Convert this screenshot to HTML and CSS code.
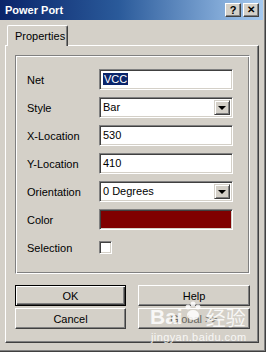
FILE: index.html
```html
<!DOCTYPE html>
<html lang="en">
<head>
    <meta charset="UTF-8">
    <title>Power Port</title>
    <link rel="stylesheet" href="styles.css">
</head>
<body>
    <div class="window">
        <div class="titlebar">
            <span class="title">Power Port</span>
            <span class="cap-btn">?</span>
            <span class="cap-btn close">&#x2715;</span>
        </div>
        <div class="content">
            <div class="tabs">
                <div class="tab">Properties</div>
            </div>
            <div class="panel">
                <div class="group">
                    <div class="row">
                        <label>Net</label>
                        <div class="field"><span class="sel">VCC</span></div>
                    </div>
                    <div class="row">
                        <label>Style</label>
                        <div class="field combo">Bar<span class="arrow"></span></div>
                    </div>
                    <div class="row">
                        <label>X-Location</label>
                        <div class="field">530</div>
                    </div>
                    <div class="row">
                        <label>Y-Location</label>
                        <div class="field">410</div>
                    </div>
                    <div class="row">
                        <label>Orientation</label>
                        <div class="field combo">0 Degrees<span class="arrow"></span></div>
                    </div>
                    <div class="row">
                        <label>Color</label>
                        <div class="field swatch"></div>
                    </div>
                    <div class="row">
                        <label>Selection</label>
                        <div><span class="check"></span></div>
                    </div>
                </div>
                <div class="buttons">
                    <button class="btn default">OK</button>
                    <button class="btn">Help</button>
                    <button class="btn">Cancel</button>
                    <button class="btn faded">Global &gt;&gt;</button>
                </div>
            </div>
        </div>
        <div class="watermark">
            <div class="wm-logo">Bai<svg width="18" height="20" viewBox="0 0 18 20"><circle cx="4" cy="6" r="2.5"/><circle cx="9" cy="3" r="2.5"/><circle cx="14" cy="6" r="2.5"/><ellipse cx="9" cy="14" rx="6" ry="5"/></svg><span class="wm-cn">经验</span></div>
            <div class="wm-url">jingyan.baidu.com</div>
        </div>
    </div>
</body>
</html>
```

FILE: styles.css
```css
body {
    margin: 0;
    background-color: #d4d0c8;
    font-family: "Liberation Sans", Arial, sans-serif;
    font-size: 11px;
    color: #000;
}
.window {
    position: relative;
    width: 266px;
    height: 352px;
    box-sizing: border-box;
    padding-right: 3px;
    background-color: #d4d0c8;
    box-shadow: inset -1px -1px #404040, inset -2px -2px #808080;
    overflow: hidden;
}
.titlebar {
    height: 20px;
    display: flex;
    align-items: center;
    gap: 2px;
    padding: 0 4px 0 5px;
    background: linear-gradient(to right, #0a246a, #2a5a9a 45%, #a6caf0);
}
.title {
    flex: 1;
    color: #fff;
    font-weight: bold;
    font-size: 11px;
}
.cap-btn {
    width: 16px;
    height: 14px;
    box-sizing: border-box;
    background-color: #d4d0c8;
    border: 1px solid;
    border-color: #fff #404040 #404040 #fff;
    box-shadow: inset -1px -1px #808080;
    font-weight: bold;
    font-size: 11px;
    line-height: 12px;
    text-align: center;
}
.cap-btn.close {
    font-size: 10px;
}
.content {
    padding: 5px 4px 0 5px;
}
.tabs {
    display: flex;
    padding-left: 2px;
}
.tab {
    position: relative;
    z-index: 1;
    width: 61px;
    height: 21px;
    box-sizing: border-box;
    margin-bottom: -1px;
    padding: 4px 0 0 7px;
    background-color: #d4d0c8;
    border: 1px solid;
    border-color: #fff #404040 transparent #fff;
    border-bottom: none;
    border-radius: 2px 2px 0 0;
    box-shadow: inset -1px 0 #808080;
}
.panel {
    height: 298px;
    box-sizing: border-box;
    padding: 9px 8px 0 9px;
    border: 1px solid;
    border-color: #fff #404040 #404040 #fff;
    box-shadow: inset -1px -1px #808080;
}
.group {
    width: 235px;
    height: 219px;
    box-sizing: border-box;
    padding: 13px 0 0 11px;
    border: 1px solid;
    border-color: #808080 #fff #fff #808080;
    box-shadow: inset 1px 1px #fff, inset -1px -1px #808080;
    display: flex;
    flex-direction: column;
    gap: 7px;
}
.row {
    display: grid;
    grid-template-columns: 72px 134px;
    align-items: center;
    height: 21px;
}
.field {
    position: relative;
    height: 21px;
    box-sizing: border-box;
    padding: 3px 0 0 3px;
    background-color: #fff;
    border: 1px solid;
    border-color: #808080 #fff #fff #808080;
    box-shadow: inset 1px 1px #404040, inset -1px -1px #d4d0c8;
}
.sel {
    background-color: #0a246a;
    color: #fff;
    padding: 0 1px;
}
.arrow {
    position: absolute;
    top: 2px;
    right: 2px;
    width: 16px;
    height: 15px;
    box-sizing: border-box;
    background-color: #d4d0c8;
    border: 1px solid;
    border-color: #d4d0c8 #404040 #404040 #d4d0c8;
    box-shadow: inset 1px 1px #fff, inset -1px -1px #808080;
}
.arrow::after {
    content: "";
    position: absolute;
    left: 3px;
    top: 5px;
    border-left: 4px solid transparent;
    border-right: 4px solid transparent;
    border-top: 4px solid #000;
}
.swatch {
    background-color: #800000;
}
.check {
    display: block;
    width: 13px;
    height: 13px;
    box-sizing: border-box;
    background-color: #fff;
    border: 1px solid;
    border-color: #808080 #fff #fff #808080;
    box-shadow: inset 1px 1px #404040, inset -1px -1px #d4d0c8;
}
.buttons {
    display: grid;
    grid-template-columns: 111px 112px;
    grid-auto-rows: 21px;
    column-gap: 12px;
    row-gap: 2px;
    margin-top: 11px;
}
.btn {
    font-family: inherit;
    font-size: 11px;
    color: #000;
    padding: 0;
    background-color: #d4d0c8;
    border: 1px solid;
    border-color: #fff #404040 #404040 #fff;
    box-shadow: inset -1px -1px #808080;
}
.btn.faded {
    color: #6a6862;
}
.btn.default {
    border-color: #000;
    box-shadow: inset 1px 1px #fff, inset -1px -1px #404040, inset -2px -2px #808080;
}
.watermark {
    position: absolute;
    left: 150px;
    top: 304px;
    color: rgba(255, 255, 255, 0.85);
}
.wm-logo {
    display: flex;
    align-items: center;
    font-size: 21px;
    font-weight: bold;
    height: 26px;
}
.wm-logo svg {
    fill: rgba(255, 255, 255, 0.85);
    margin: -12px 0 0 1px;
}
.wm-cn {
    margin-left: 4px;
    font-family: "Noto Sans CJK SC", sans-serif;
    font-weight: normal;
    font-size: 20px;
}
.wm-url {
    font-size: 11px;
    margin-left: 1px;
    margin-top: 1px;
    letter-spacing: 0.4px;
}
```
